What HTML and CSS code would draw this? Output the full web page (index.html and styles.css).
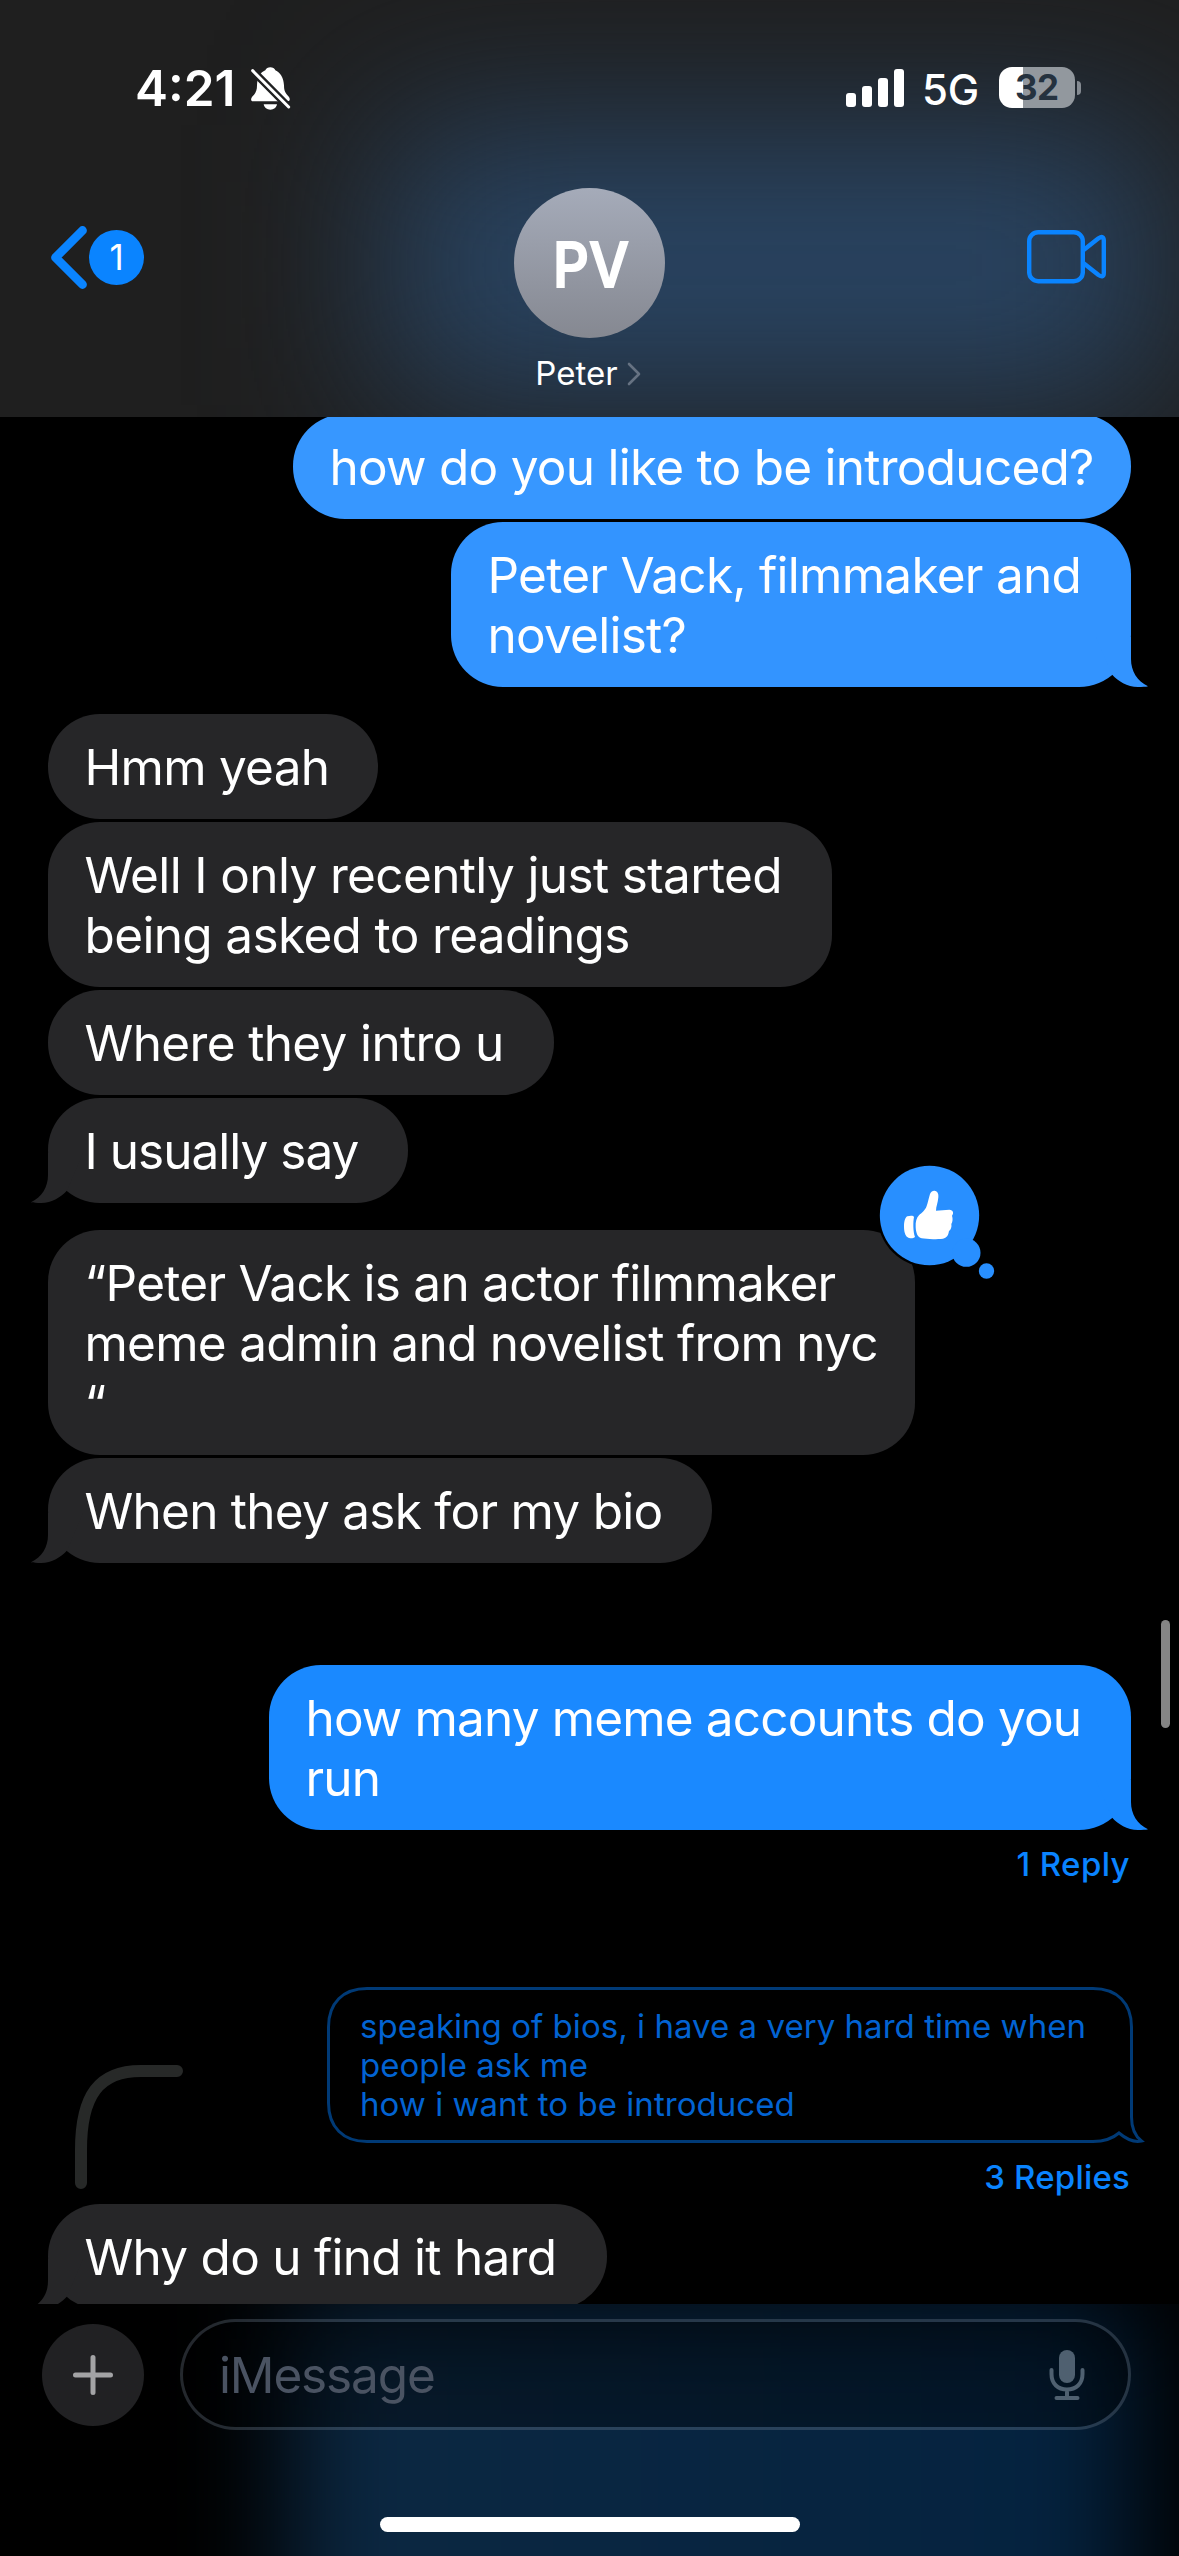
FILE: index.html
```html
<!DOCTYPE html>
<html lang="en">
<head>
<meta charset="utf-8">
<title>Messages</title>
<link rel="stylesheet" href="styles.css">
</head>
<body>
<svg class="defs" width="0" height="0" aria-hidden="true">
  <symbol id="tail" viewBox="0 0 70 50">
    <path fill="currentColor" d="M15 0H50V22C50 34 56 44 67 49.3C65 50 61 50 57 50C46 50 37 44 31 37.5Z"/>
  </symbol>
</svg>
<div class="screen">
  <header class="header">
    <div class="status">
      <div class="status-left">
        <span class="time">4:21</span>
        <svg class="bell" width="40" height="44" viewBox="32 50 120 132">
          <mask id="cut">
            <rect x="20" y="40" width="140" height="150" fill="#fff"/>
            <path d="M37 61L145 170" stroke="#000" stroke-width="23" stroke-linecap="round"/>
          </mask>
          <g fill="#fff">
            <path mask="url(#cut)" d="M38 153C31 153 31 146 35 140C46 128 50 122 50 105C51 80 60 66 75 60C77 54 83 51 90 51C97 51 103 55 105 60C120 67 130 82 131 105C131 122 135 128 146 140C150 146 149 153 142 153Z"/>
            <path mask="url(#cut)" d="M70 162H110C108 172 100 178 90 178C80 178 72 172 70 162Z"/>
          </g>
          <path d="M37 61L145 170" stroke="#fff" stroke-width="9" stroke-linecap="round"/>
        </svg>
      </div>
      <div class="status-right">
        <svg class="signal" width="58" height="38" viewBox="0 0 58 38" fill="#fff">
          <rect x="0" y="24" width="10" height="14" rx="3"/>
          <rect x="16" y="17" width="10" height="21" rx="3"/>
          <rect x="32" y="9" width="10" height="29" rx="3"/>
          <rect x="48" y="0" width="10" height="38" rx="3"/>
        </svg>
        <span class="network">5G</span>
        <div class="battery"><span>32</span></div>
        <i class="battery-tip"></i>
      </div>
    </div>
    <nav class="nav">
      <div class="back">
        <svg width="39" height="65" viewBox="0 0 39 65" fill="none" stroke="#0a84ff" stroke-width="8.8" stroke-linecap="round" stroke-linejoin="round"><path d="M32.500 5.500L5.500 32.500L32.500 59.500"/></svg>
        <span class="badge">1</span>
      </div>
      <div class="contact">
        <div class="avatar"><span>PV</span></div>
        <div class="name">Peter
          <svg width="14" height="24" viewBox="0 0 14 24" fill="none" stroke="#667282" stroke-width="2.6" stroke-linecap="round" stroke-linejoin="round"><path d="M2 2L12 12L2 22"/></svg>
        </div>
      </div>
      <svg class="camera" width="80" height="54" viewBox="0 0 80 54" fill="none" stroke="#0a84ff" stroke-width="4.4" stroke-linejoin="round">
        <rect x="2.2" y="2.2" width="53.6" height="49" rx="9"/>
        <path d="M56 20.5L71.5 8.3Q76.8 5 76.8 10.5V43Q76.8 48.5 71.5 45L56 32.8"/>
      </svg>
    </nav>
  </header>

  <main class="thread">
    <div class="bubble sent tone-a w-838">how do you like to be introduced?</div>
    <div class="bubble sent tone-b w-680">Peter Vack, filmmaker and<br>novelist?<svg class="tail"><use href="#tail"/></svg></div>

    <div class="bubble received group w-330">Hmm yeah</div>
    <div class="bubble received loose w-784">Well I only recently just started<br>being asked to readings</div>
    <div class="bubble received loose w-506">Where they intro u</div>
    <div class="bubble received tight w-360">I usually say<svg class="tail"><use href="#tail"/></svg></div>

    <div class="bubble received group w-867">“Peter Vack is an actor filmmaker<br>meme admin and novelist from nyc<br>“
      <svg class="reaction" width="150" height="150" viewBox="0 0 450 450">
        <circle cx="178.5" cy="196.5" r="156" fill="#000"/>
        <g fill="#288fff">
          <circle cx="178.5" cy="196.5" r="149"/>
          <circle cx="289" cy="308" r="42.5"/>
          <circle cx="349.5" cy="363" r="23"/>
        </g>
        <g fill="#fff">
          <path d="M112 199C122 196 131 197 132 201C129 215 129 245 135 261C130 266 118 266 113 262C106 257 102 245 102 230C102 215 105 203 112 199Z"/>
          <path d="M180 132C184 124 190 121 196 123C204 125 206 134 205 142C204 158 198 170 198 182L238 179C250 180 252 189 246 197C249 206 248 216 244 222C246 232 242 240 237 243C235 256 230 264 219 266C200 268 170 268 155 265C143 262 138 250 137 232C136 215 140 203 147 196C155 188 165 182 170 168C174 157 176 145 180 132Z"/>
        </g>
      </svg>
    </div>
    <div class="bubble received w-664">When they ask for my bio<svg class="tail"><use href="#tail"/></svg></div>

    <div class="bubble sent tone-c later w-862">how many meme accounts do you<br>run<svg class="tail"><use href="#tail"/></svg></div>
    <div class="replies">1 Reply</div>

    <div class="context">
      <svg class="connector" width="108" height="124" viewBox="0 0 108 124" fill="none" stroke="#272928" stroke-width="12" stroke-linecap="round"><path d="M6 118V85C6 30 24 6 66 6H102"/></svg>
      <div class="context-main">
        <div class="quote">
          <svg class="quote-frame" width="820" height="156" viewBox="0 0 820 156" fill="none" stroke="#003a76" stroke-width="3"><path d="M40 1.500H766C790 1.500 804.500 16 804.500 40V130C804.500 141 808 149 814.500 154C806 156 798 151 792 146C785 152 777 154.500 766 154.500H40C16 154.500 1.500 140 1.500 116V40C1.500 16 16 1.500 40 1.500Z"/></svg>
          speaking of bios, i have a very hard time when<br>people ask me<br>how i want to be introduced
        </div>
        <div class="replies">3 Replies</div>
      </div>
    </div>
    <div class="bubble received answer w-559">Why do u find it hard<svg class="tail"><use href="#tail"/></svg></div>
    <i class="scrollbar"></i>
  </main>

  <footer class="composer">
    <div class="composer-row">
      <div class="add"><svg width="40" height="40" viewBox="0 0 40 40" stroke="#a3a3a5" stroke-width="5" stroke-linecap="round"><path d="M20 2.500V37.500M2.500 20H37.500"/></svg></div>
      <div class="input">
        <span>iMessage</span>
        <svg width="36" height="52" viewBox="0 0 36 52" fill="none" stroke="#4f6070" stroke-width="4" stroke-linecap="round">
          <rect x="10" y="1" width="16" height="33" rx="8" fill="#4f6070" stroke="none"/>
          <path d="M2.500 21V25C2.500 35 9 40.500 18 40.500C27 40.500 33.500 35 33.500 25V21M18 41V48M7.500 49H28.500"/>
        </svg>
      </div>
    </div>
    <div class="home"></div>
  </footer>
</div>
</body>
</html>
```

FILE: styles.css
```css
* { box-sizing: border-box; }

body {
  margin: 0;
  background: #000;
  color: #fff;
  font-family: Inter, "Liberation Sans", sans-serif;
}

svg { display: block; flex: none; }
.defs { position: absolute; }

.screen {
  display: grid;
  grid-template-rows: 417px 1887px 252px;
  width: 1179px;
  height: 2556px;
  overflow: hidden;
}

/* Header */
.header {
  position: relative;
  overflow: hidden;
  background: #1f1f1f;
  isolation: isolate;
}
.header::before {
  content: "";
  position: absolute;
  z-index: -1;
  left: 385px;
  top: 125px;
  width: 775px;
  height: 280px;
  background: #294462;
  filter: blur(85px);
}
.status {
  display: flex;
  justify-content: space-between;
  height: 118px;
  padding: 58px 98px 0 135px;
}
.status-left, .status-right { display: flex; align-items: flex-start; }
.time {
  font-size: 49.5px;
  font-weight: 600;
  line-height: 60px;
  width: 116px;
}
.bell { margin-top: 8.5px; }
.signal { margin-top: 10.5px; }
.network {
  margin: 1.5px 0 0 18px;
  width: 77px;
  font-size: 42px;
  font-weight: 450;
  line-height: 60px;
  letter-spacing: -0.3px;
}
.battery {
  width: 75.5px;
  height: 41px;
  margin-top: 9px;
  border-radius: 13px;
  background: linear-gradient(90deg, #fff 24px, #92989e 24px);
  color: #25323f;
  font-size: 35px;
  font-weight: 700;
  line-height: 41px;
  letter-spacing: -0.5px;
  text-align: center;
}
.battery-tip {
  width: 4px;
  height: 14px;
  margin: 23px 0 0 2.5px;
  border-radius: 0 4px 4px 0;
  background: #858b92;
}

.nav {
  display: grid;
  grid-template-columns: 1fr auto 1fr;
  align-items: start;
  padding-top: 70px;
}
.back {
  display: flex;
  align-items: center;
  padding: 37px 0 0 50px;
}
.badge {
  width: 55px;
  height: 55px;
  border-radius: 50%;
  background: #0a84ff;
  font-size: 35px;
  line-height: 55px;
  text-align: center;
}
.contact { display: flex; flex-direction: column; align-items: center; }
.avatar {
  display: grid;
  place-items: center;
  width: 151px;
  height: 150px;
  border-radius: 50%;
  background: linear-gradient(#a5abb9, #858891);
  font-size: 62px;
  font-weight: 500;
}
.avatar span {
  padding: 2px 0 0 4px;
  letter-spacing: 0.5px;
  -webkit-text-stroke: 2.2px #fff;
  stroke-linejoin: round;
  transform: scaleX(0.9);
}
.name {
  display: flex;
  align-items: center;
  gap: 9px;
  margin: 14.5px 3px 0 0;
  font-size: 33px;
  line-height: 40px;
}
.name svg { margin-top: 3px; }
.camera { justify-self: end; margin: 42px 72px 0 0; }

/* Conversation */
.thread {
  position: relative;
  display: flex;
  flex-direction: column;
  align-items: flex-start;
  gap: 3px;
  overflow: hidden;
  padding: 0 48px;
}
.thread > * { flex: none; }
.thread > .bubble:first-child { margin-top: -3px; }
.bubble {
  position: relative;
  padding: 22.5px 0 22.5px 36.5px;
  border-radius: 52px;
  font-size: 49.5px;
  line-height: 60px;
  letter-spacing: -0.74px;
  white-space: nowrap;
}
.received { background: #262628; color: #262628; }
.received, .sent { -webkit-text-fill-color: #fff; }
.sent { align-self: flex-end; }
.tone-a { background: #3797ff; }
.tone-b { background: #3394ff; color: #3394ff; }
.tone-c { background: #1a89ff; color: #1a89ff; letter-spacing: -0.85px; }
.loose { letter-spacing: -0.64px; }
.tight { letter-spacing: -0.98px; }
.group { margin-top: 24px; }
.later { margin-top: 99px; }
.answer { margin-top: 4px; }

.w-330 { width: 330px; }
.w-360 { width: 360px; }
.w-506 { width: 506px; }
.w-559 { width: 559px; }
.w-664 { width: 664px; }
.w-680 { width: 680px; }
.w-784 { width: 784px; }
.w-838 { width: 838px; }
.w-862 { width: 862px; }
.w-867 { width: 867px; }

.tail {
  position: absolute;
  right: -20px;
  bottom: 0;
  width: 70px;
  height: 50px;
}
.received .tail { right: auto; left: -20px; transform: scaleX(-1); }
.reaction { position: absolute; top: -80px; right: -105px; }

.replies {
  align-self: flex-end;
  margin: 11px 1px 0 0;
  color: #0a84ff;
  font-size: 33px;
  font-weight: 500;
  line-height: 40px;
  letter-spacing: 0.4px;
}
.context {
  display: flex;
  align-items: flex-end;
  justify-content: space-between;
  align-self: stretch;
  margin: 100px 0 0;
  padding-left: 27px;
}
.connector { margin-bottom: 8px; }
.context-main { display: flex; flex-direction: column; margin-right: -2px; }
.context-main .replies { margin: 14px 3px 0 0; letter-spacing: 0.2px; }
.quote {
  position: relative;
  width: 806px;
  height: 156px;
  padding: 20px 0 0 33px;
  color: #0263d2;
  font-size: 33px;
  line-height: 39px;
  letter-spacing: 0.04px;
  white-space: nowrap;
}
.quote-frame { position: absolute; left: 0; top: 0; }
.scrollbar {
  position: absolute;
  top: 1203px;
  right: 9px;
  width: 9px;
  height: 108px;
  border-radius: 5px;
  background: #858585;
}

/* Composer */
.composer {
  position: relative;
  overflow: hidden;
  padding: 15px 48px 0 42px;
  background: #000;
  isolation: isolate;
}
.composer::before {
  content: "";
  position: absolute;
  z-index: -1;
  left: 290px;
  top: -2px;
  width: 842px;
  height: 440px;
  background: linear-gradient(90deg, #0c2842, #04223f);
  filter: blur(56px);
}
.composer-row { display: flex; align-items: center; gap: 36px; }
.add {
  display: grid;
  place-items: center;
  width: 102px;
  height: 102px;
  border-radius: 50%;
  background: #212123;
}
.input {
  display: flex;
  flex: 1;
  align-items: center;
  justify-content: space-between;
  height: 111px;
  padding: 0 43px 0 36px;
  border: 3px solid rgba(130, 145, 160, 0.28);
  border-radius: 56px;
  background: rgba(0, 0, 0, 0.36);
  background-clip: padding-box;
  color: #4a5362;
  font-size: 49.5px;
  line-height: 60px;
  letter-spacing: -1.15px;
}
.home {
  width: 420px;
  height: 15px;
  margin: 87px auto 0 338px;
  border-radius: 8px;
  background: #fff;
}
```
